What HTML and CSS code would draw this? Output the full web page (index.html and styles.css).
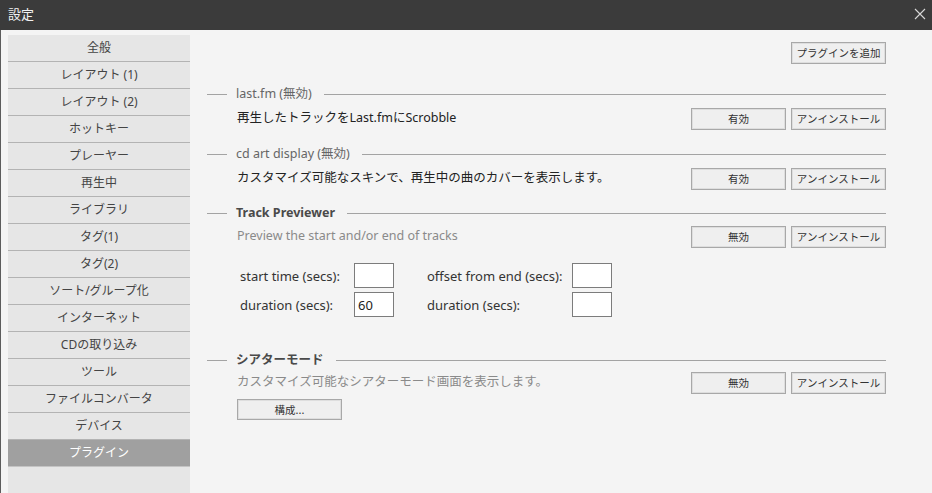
FILE: index.html
```html
<!DOCTYPE html>
<html lang="ja">
<head>
<meta charset="utf-8">
<title>設定</title>
<link rel="stylesheet" href="styles.css">
</head>
<body>
<div class="titlebar">
  <span class="title">設定</span>
  <svg class="close" width="12" height="12" viewBox="0 0 12 12"><path d="M1 1L11 11M11 1L1 11" stroke="#d8d8d8" stroke-width="1.1" fill="none"/></svg>
</div>
<div class="frame">
  <nav class="sidebar">
    <div class="item">全般</div>
    <div class="item">レイアウト (1)</div>
    <div class="item">レイアウト (2)</div>
    <div class="item">ホットキー</div>
    <div class="item">プレーヤー</div>
    <div class="item">再生中</div>
    <div class="item">ライブラリ</div>
    <div class="item">タグ(1)</div>
    <div class="item">タグ(2)</div>
    <div class="item">ソート/グループ化</div>
    <div class="item">インターネット</div>
    <div class="item">CDの取り込み</div>
    <div class="item">ツール</div>
    <div class="item">ファイルコンバータ</div>
    <div class="item">デバイス</div>
    <div class="item active">プラグイン</div>
  </nav>
  <main class="content">
    <div class="toprow"><button class="btn">プラグインを追加</button></div>

    <section class="plugin s1">
      <div class="sec-head"><span>last.fm (無効)</span></div>
      <div class="row">
        <p class="desc">再生したトラックをLast.fmにScrobble</p>
        <div class="btns"><button class="btn">有効</button><button class="btn">アンインストール</button></div>
      </div>
    </section>

    <section class="plugin s2">
      <div class="sec-head"><span>cd art display (無効)</span></div>
      <div class="row">
        <p class="desc">カスタマイズ可能なスキンで、再生中の曲のカバーを表示します。</p>
        <div class="btns"><button class="btn">有効</button><button class="btn">アンインストール</button></div>
      </div>
    </section>

    <section class="plugin s3">
      <div class="sec-head bold"><span>Track Previewer</span></div>
      <div class="row">
        <p class="desc muted">Preview the start and/or end of tracks</p>
        <div class="btns"><button class="btn">無効</button><button class="btn">アンインストール</button></div>
      </div>
      <div class="grid">
        <label>start time (secs):</label><input class="num" type="text" value="">
        <label>offset from end (secs):</label><input class="num" type="text" value="">
        <label>duration (secs):</label><input class="num" type="text" value="60">
        <label>duration (secs):</label><input class="num" type="text" value="">
      </div>
    </section>

    <section class="plugin s4">
      <div class="sec-head bold"><span>シアターモード</span></div>
      <div class="row">
        <p class="desc muted">カスタマイズ可能なシアターモード画面を表示します。</p>
        <div class="btns"><button class="btn">無効</button><button class="btn">アンインストール</button></div>
      </div>
      <button class="btn config">構成...</button>
    </section>
  </main>
</div>
</body>
</html>
```
FILE: styles.css
```css
* { box-sizing: border-box; }
html, body {
  margin: 0;
  width: 932px;
  height: 493px;
  overflow: hidden;
  background: #f4f4f4;
  font-family: "Noto Sans", "Noto Sans CJK JP", sans-serif;
  font-size: 12px;
  line-height: 16px;
  color: #333;
}
.titlebar {
  height: 30px;
  background: #3b3b3b;
  display: flex;
  align-items: center;
  justify-content: space-between;
  padding: 0 6px 2px 8px;
  color: #f2f2f2;
  font-size: 13px;
}
.close { display: block; }
.frame {
  display: flex;
  height: 463px;
  padding: 5px 0 0 7px;
  border-left: 1px solid #5c5c5c;
}
.sidebar {
  width: 182px;
  flex: none;
  background: #e6e6e6;
}
.item {
  height: 27px;
  border-bottom: 1px solid #b3b3b3;
  display: flex;
  align-items: center;
  justify-content: center;
  color: #444;
  font-size: 12px;
  padding-bottom: 1px;
}
.item.active {
  background: #a0a0a0;
  color: #fff;
  border-bottom-color: #c4c4c4;
}
.content {
  flex: 1;
  padding: 7px 46px 0 17px;
  font-size: 12.5px;
}
.toprow {
  display: flex;
  justify-content: flex-end;
}
.btn {
  width: 95px;
  height: 22px;
  border: 1px solid #a8a8a8;
  box-shadow: inset 0 0 0 1px #dedede;
  background: #efefef;
  font-family: "Noto Sans CJK JP", sans-serif;
  font-size: 10.5px;
  color: #333;
  padding: 0;
  margin: 0;
  line-height: 18px;
}
.sec-head {
  display: flex;
  align-items: center;
  height: 16px;
  color: #666;
}
.sec-head::before {
  content: "";
  width: 20px;
  height: 1px;
  background: #a3a3a3;
}
.sec-head::after {
  content: "";
  flex: 1;
  height: 1px;
  background: #a3a3a3;
}
.sec-head span { margin: 0 12px 0 9px; white-space: nowrap; }
.sec-head.bold { font-weight: bold; color: #4a4a4a; }
.row {
  display: flex;
  align-items: center;
  justify-content: space-between;
  height: 22px;
  margin-top: 6px;
}
.desc {
  margin: 0 0 2px;
  padding-left: 30px;
  color: #222;
}
.desc.muted { color: #8a8a8a; }
.btns { display: flex; gap: 5px; }
.s1 { margin-top: 22px; }
.s2 { margin-top: 16px; }
.s3 { margin-top: 15px; }
.s3 .row { margin-top: 5px; }
.s4 { margin-top: 35px; }
.s4 .row { margin-top: 4px; }
.grid {
  display: grid;
  grid-template-columns: 114px 40px 33px 145px 40px;
  grid-auto-rows: 25px;
  row-gap: 4px;
  margin: 15px 0 0 33px;
  align-items: center;
}
.grid label:nth-of-type(odd) { grid-column: 1; }
.grid label:nth-of-type(even) { grid-column: 4; }
.grid label { color: #333; font-size: 13px; white-space: nowrap; }
.num {
  width: 40px;
  height: 25px;
  border: 1px solid #7c7c7c;
  background: #fff;
  font-family: "Noto Sans", sans-serif;
  font-size: 13px;
  color: #222;
  padding: 0 0 0 3px;
  margin: 0;
}
.config {
  width: 105px;
  height: 21px;
  margin: 5px 0 0 30px;
  display: block;
}
```
